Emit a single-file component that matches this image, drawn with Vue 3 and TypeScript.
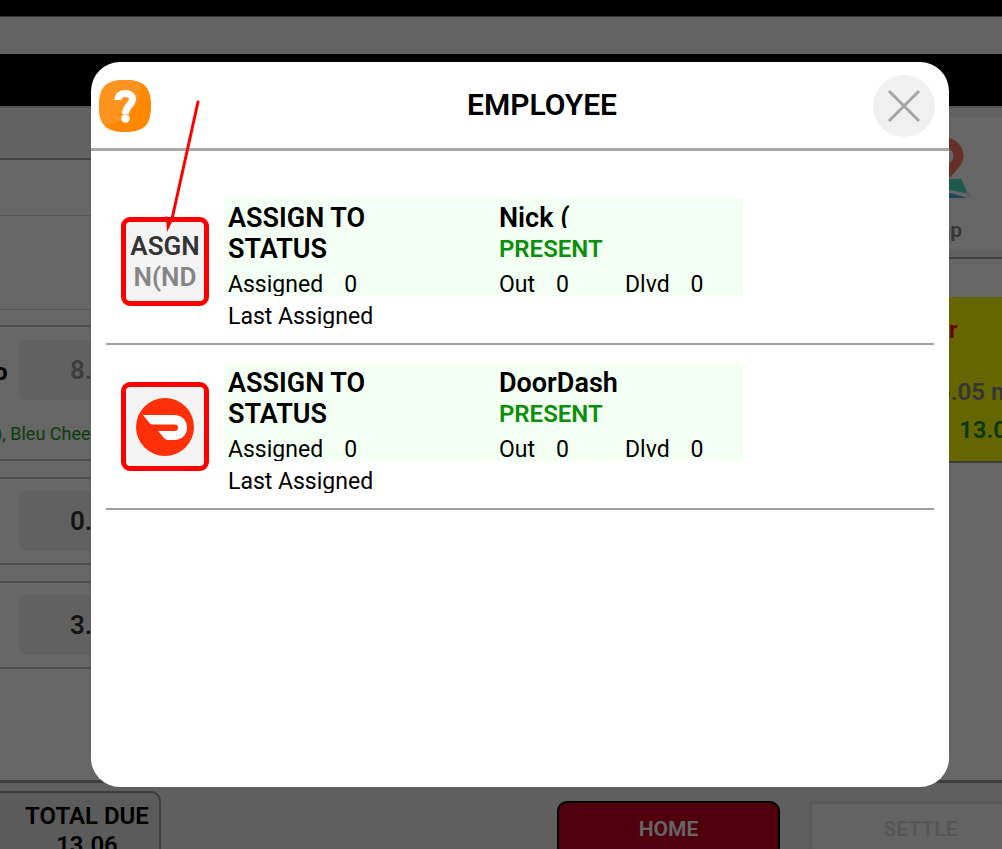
<script setup lang="ts">
import { ref } from 'vue'

interface Employee {
  name: string
  status: string
  clipped: boolean
  brand: boolean
  assigned: number
  out: number
  delivered: number
}

const employees = ref<Employee[]>([
  { name: 'Nick (', status: 'PRESENT', clipped: true, brand: false, assigned: 0, out: 0, delivered: 0 },
  { name: 'DoorDash', status: 'PRESENT', clipped: false, brand: true, assigned: 0, out: 0, delivered: 0 },
])
</script>

<template>
  <div class="screen">
    <div class="page">
      <div class="system-bar"></div>
      <div class="tool-bar"></div>
      <div class="title-bar"></div>
      <div class="body">
        <section class="order">
          <div class="order-head"></div>
          <div class="order-band"></div>
          <div class="order-band tall"></div>
          <div class="item first">
            <div class="item-line">
              <label class="item-name" for="price-1">o</label>
              <input id="price-1" class="price muted" value="8." />
            </div>
            <p class="options">), Bleu Chee</p>
          </div>
          <div class="item">
            <div class="item-line">
              <input class="price" aria-label="Price" value="0." />
            </div>
          </div>
          <div class="item">
            <div class="item-line">
              <input class="price" aria-label="Price" value="3." />
            </div>
          </div>
        </section>
        <aside class="side">
          <div class="map-box">
            <button class="map" type="button">
              <svg width="72" height="84" viewBox="0 0 72 84" aria-hidden="true">
                <path d="M0 62H31.500L37.500 76.500L0 69z" fill="#4fe0c2" />
                <path d="M0 73Q20 75 37 81H0z" fill="#4aa8ee" />
                <path d="M36 72L43 82L37 79z" fill="#e4e4e4" />
                <path fill-rule="evenodd" fill="#ff7564" d="M15 20.500a18.500 18.500 0 0 1 18.500 18.500c0 9-9 16-18.500 27C6 55-3.500 48-3.500 39A18.500 18.500 0 0 1 15 20.500zM15 30.500a8.500 8.500 0 1 0 0 17 8.500 8.500 0 0 0 0-17z" />
              </svg>
              <span>ap</span>
            </button>
          </div>
          <div class="ticket">
            <p class="ticket-type">er</p>
            <p class="ticket-distance">5.05 m</p>
            <p class="ticket-total">13.0</p>
          </div>
        </aside>
      </div>
      <footer class="footer">
        <div class="total">
          <span>TOTAL DUE</span>
          <span>13.06</span>
        </div>
        <button class="home" type="button">HOME</button>
        <button class="settle" type="button" disabled>SETTLE</button>
      </footer>
    </div>

    <div class="overlay">
      <div class="dialog" role="dialog" aria-modal="true" aria-labelledby="dialog-title">
        <header class="dialog-head">
          <button class="help" type="button" aria-label="Help">
            <svg width="52" height="52" viewBox="0 0 52 52" aria-hidden="true">
              <path fill="#ff8800" d="M26 0C45 0 52 7 52 26S45 52 26 52 0 45 0 26 7 0 26 0z" />
              <path fill="#ff931f" d="M26 0C33 0 38 1 42 3C42 25 28 43 6 45C1 41 0 35 0 26C0 7 7 0 26 0z" />
              <path fill="none" stroke="#fff" stroke-width="7" d="M19 20C19 15.500 22 13.500 26.500 13.500C31 13.500 33.500 16 33.500 19C33.500 25 26.500 25 26.500 34" />
              <circle cx="26.500" cy="38.500" r="4.300" fill="#fff" />
            </svg>
          </button>
          <h1 id="dialog-title">EMPLOYEE</h1>
          <button class="close" type="button" aria-label="Close">
            <svg width="62" height="62" viewBox="0 0 62 62" aria-hidden="true">
              <path d="M16 16L46 46M46 16L16 46" stroke="#a6a6a6" stroke-width="3" />
            </svg>
          </button>
        </header>

        <ul class="list">
          <li v-for="e in employees" :key="e.name" class="row">
            <button v-if="e.brand" class="tile" type="button" :aria-label="e.name">
              <svg width="58" height="58" viewBox="0 0 58 58" aria-hidden="true">
                <circle cx="29" cy="29" r="29" fill="#ff3008" />
                <path fill="#fff" d="M7 17H38C46 17 51 22 51 29.500S46 42 38 42H32Q30 42 28.500 40.500L22 33H38.500Q42 33 42 29.800T38.500 26.500H17Q15 26.500 13.500 25z" />
              </svg>
            </button>
            <button v-else class="tile" type="button">
              <span class="tile-top">ASGN</span>
              <span class="tile-bottom">N(ND</span>
            </button>
            <div class="info">
              <div class="card">
                <strong class="action">ASSIGN TO STATUS</strong>
                <div class="who">
                  <strong class="name" :class="{ clipped: e.clipped }">{{ e.name }}</strong>
                  <strong class="present">{{ e.status }}</strong>
                </div>
                <div class="stat"><span>Assigned</span><span>{{ e.assigned }}</span></div>
                <div class="stat"><span>Out</span><span>{{ e.out }}</span></div>
                <div class="stat"><span>Dlvd</span><span>{{ e.delivered }}</span></div>
              </div>
              <p class="last">Last Assigned</p>
            </div>
          </li>
        </ul>
      </div>
      <svg class="arrow" width="36" height="134" viewBox="0 0 36 134" aria-hidden="true">
        <path d="M34 2L8 119" stroke="#f00" stroke-width="3" stroke-linecap="round" />
        <path d="M2 116L9 120L3 132z" fill="#f00" />
      </svg>
    </div>
  </div>
</template>

<style>
body {
  margin: 0;
}
</style>

<style scoped>
.screen,
.screen * {
  box-sizing: border-box;
}
.screen {
  position: relative;
  height: 100vh;
  overflow: hidden;
  font-family: Roboto, 'Liberation Sans', sans-serif;
  font-size: 24px;
  color: #000;
}
p,
h1,
ul {
  margin: 0;
  padding: 0;
}
button,
input {
  margin: 0;
  padding: 0;
  border: 0;
  font: inherit;
}
.page {
  display: flex;
  flex-direction: column;
  height: 100%;
  background: #fff;
}
.system-bar {
  height: 16px;
  flex: none;
  background: #000;
}
.tool-bar {
  height: 38px;
  flex: none;
  background: #f8f8f8;
  border-top: 1px solid #808080;
}
.title-bar {
  height: 52px;
  flex: none;
  background: #000;
}
.body {
  display: flex;
  flex: 1;
  min-height: 0;
  border-bottom: 3px solid #9c9c9c;
}
.order {
  flex: 1;
  min-width: 0;
  overflow: hidden;
}
.order-head {
  height: 54px;
  background: #f6f6f6;
  border-top: 2px solid #cccccc;
  border-bottom: 2px solid #a8a8a8;
}
.order-band {
  height: 56px;
  border-bottom: 1px solid #d6d6d6;
}
.order-band.tall {
  height: 94px;
}
.item {
  margin-top: 16px;
  padding: 12px 0;
  border-top: 2px solid #b4c4ce;
  border-bottom: 2px solid #b4c4ce;
}
.item.first {
  margin-top: 15px;
  padding-top: 13px;
  padding-bottom: 0;
}
.item-line {
  display: flex;
  justify-content: flex-end;
  height: 60px;
  width: 200px;
}
.item-name {
  flex: 0 0 19px;
  line-height: 64px;
  font-weight: 700;
  text-indent: -6px;
}
.price {
  width: 181px;
  padding-left: 51px;
  border-radius: 8px;
  background: #f3f3f3;
  font-size: 26px;
  font-weight: 600;
  color: #333;
}
.price.muted {
  color: #999;
}
.options {
  padding-top: 18px;
  height: 59px;
  font-size: 18px;
  line-height: 32px;
  color: #1d9a1d;
  text-indent: -4px;
  white-space: nowrap;
}
.side {
  flex: 0 0 72px;
  overflow: hidden;
}
.map-box {
  height: 153px;
  padding: 9px 0 7px;
  background: #f2f2f2;
  border-top: 2px solid #cccccc;
  border-bottom: 2px solid #a8a8a8;
}
.map {
  display: flex;
  flex-direction: column;
  width: 100%;
  height: 100%;
  background: #fff;
  font-size: 21px;
  font-weight: 600;
  line-height: 24px;
  text-align: left;
  color: #888;
}
.map svg {
  flex: none;
}
.map span {
  margin-top: 17px;
  padding-left: 9px;
}
.ticket {
  margin-top: 38px;
  height: 166px;
  padding-top: 17px;
  background: #ff0;
  border-bottom: 2px solid #999;
  font-weight: 600;
  white-space: nowrap;
}
.ticket p {
  line-height: 32px;
}
.ticket .ticket-type {
  padding-left: 6px;
  color: #f00;
}
.ticket .ticket-distance {
  margin-top: 30px;
  padding-left: 7px;
  color: #888;
}
.ticket .ticket-total {
  margin-top: 6px;
  padding-left: 29px;
  color: #109010;
}
.footer {
  display: flex;
  flex: 0 0 66px;
  overflow: hidden;
  background: #eee;
}
.total {
  flex: 0 0 161px;
  display: flex;
  flex-direction: column;
  align-items: center;
  height: 80px;
  margin-top: 8px;
  padding: 9px 0 0 15px;
  border: 2px solid #999;
  border-left: 0;
  border-radius: 0 10px 0 0;
  background: #e4e4e4;
  font-weight: 600;
  line-height: 29px;
}
.home,
.settle {
  height: 80px;
  margin-top: 18px;
  padding-bottom: 25px;
  font-size: 21px;
  font-weight: 600;
}
.home {
  flex: 0 0 223px;
  margin-left: auto;
  margin-right: 29px;
  border: 2px solid #000;
  border-radius: 10px;
  background: #c6001e;
  color: #fff;
}
.settle {
  flex: 0 0 223px;
  margin-right: -30px;
  border: 3px solid #e0e0e0;
  background: #f8f8f8;
  color: #d8d8d8;
}
.overlay {
  position: absolute;
  inset: 0;
  padding: 62px 53px 62px 91px;
  background: rgba(0, 0, 0, 0.6);
}
.dialog {
  height: 100%;
  overflow: hidden;
  border-radius: 29px;
  background: #fff;
}
.dialog-head {
  display: flex;
  align-items: center;
  height: 89px;
  padding: 2px 14px 0 8px;
  border-bottom: 3px solid #a8a8a8;
}
.help,
.close {
  flex: none;
  background: none;
}
.help svg,
.close svg {
  display: block;
}
.close {
  border-radius: 50%;
  background: #f0f0f0;
}
h1 {
  flex: 1;
  padding: 0 0 2px 60px;
  font-size: 30px;
  font-weight: 600;
  line-height: 36px;
  text-align: center;
}
.list {
  padding: 29px 15px 0;
  list-style: none;
}
.row {
  display: grid;
  grid-template-columns: 88px 519fr 191fr;
  align-items: center;
  height: 165px;
  padding-left: 15px;
  border-bottom: 2px solid #9e9e9e;
}
.tile {
  display: flex;
  flex-direction: column;
  align-items: center;
  justify-content: center;
  height: 89px;
  border: 5px solid #f00;
  border-radius: 9px;
  background: #f3f3f3;
  font-size: 26px;
  font-weight: 600;
  line-height: 31px;
}
.tile-top {
  color: #333;
}
.tile-bottom {
  color: #858585;
}
.info {
  margin-left: 15px;
  margin-right: -4px;
  padding-top: 2px;
}
.card {
  display: grid;
  grid-template-columns: 271fr 126fr 118fr;
  row-gap: 4px;
  height: 98px;
  padding: 5px 0 0 4px;
  overflow: hidden;
  background: #f2fff2;
}
.action {
  padding-right: 100px;
  font-size: 27px;
  font-weight: 600;
  line-height: 31px;
}
.who {
  grid-column: span 2;
  display: flex;
  flex-direction: column;
}
.name {
  font-size: 27px;
  font-weight: 600;
  line-height: 31px;
}
.name.clipped {
  height: 25px;
  margin-bottom: 6px;
  overflow: hidden;
}
.present {
  font-weight: 600;
  line-height: 31px;
  color: #0a8f0a;
}
.stat {
  display: flex;
  gap: 21px;
  font-size: 23px;
  line-height: 32px;
}
.last {
  height: 32px;
  padding: 5px 0 0 4px;
  font-size: 23px;
  line-height: 32px;
  overflow: hidden;
}
.arrow {
  position: absolute;
  left: 164px;
  top: 100px;
}
</style>
